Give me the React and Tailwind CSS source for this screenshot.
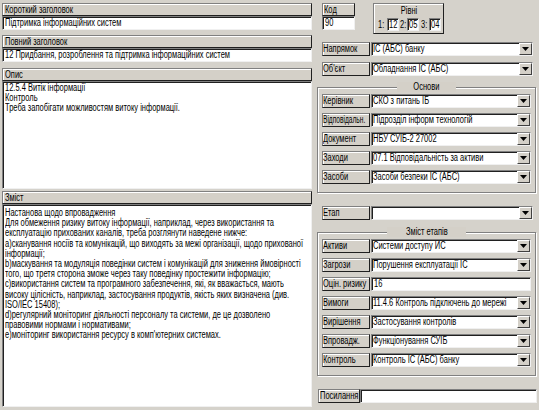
import React from "react";

const sunken =
  "bg-white border border-t-[#808080] border-l-[#808080] border-b-[#f0f0f0] border-r-[#f0f0f0] shadow-[inset_1px_1px_0_#202020]";
const raised =
  "bg-[#d4d0c8] border border-t-[#808080] border-l-[#808080] border-b-[#202020] border-r-[#202020] shadow-[inset_1px_1px_0_#ffffff]";

function T({ children, center, narrow }) {
  return (
    <span
      className={`inline-block whitespace-nowrap ${narrow ? "scale-x-[0.66]" : "scale-x-[0.75]"} ${
        center ? "origin-center" : "origin-left"
      }`}
    >
      {children}
    </span>
  );
}

function Bar({ children, className = "", narrow }) {
  return (
    <div className={`h-[13px] ${raised} flex items-center overflow-hidden ${className}`}>
      <T narrow={narrow}>{children}</T>
    </div>
  );
}

function Field({ children, className = "" }) {
  return (
    <div className={`h-[14px] ${sunken} pl-[2px] flex items-center overflow-hidden min-w-0 ${className}`}>
      <T>{children}</T>
    </div>
  );
}

function Arrow() {
  return (
    <svg width="7" height="4" viewBox="0 0 7 4" className="block">
      <path d="M0 0 H7 L3.5 4 Z" fill="#000" />
    </svg>
  );
}

function Select({ children }) {
  return (
    <div className={`flex-1 min-w-0 h-[14px] ${sunken} flex`}>
      <div className="flex-1 min-w-0 pl-[1px] flex items-center overflow-hidden">
        <T>{children}</T>
      </div>
      <div className="w-[13px] shrink-0 h-full bg-[#d4d0c8] border border-t-white border-l-white border-b-[#404040] border-r-[#404040] flex items-center justify-center">
        <Arrow />
      </div>
    </div>
  );
}

function Row({ label, children, input, narrow }) {
  return (
    <div className="flex h-[14px] gap-[1px] min-w-0">
      <Bar className="w-[48px] h-[14px] shrink-0 pl-0" narrow={narrow}>
        {label}
      </Bar>
      {input ? <Field className="flex-1">{children}</Field> : <Select>{children}</Select>}
    </div>
  );
}

function Small({ children }) {
  return (
    <div className={`w-[12px] h-[13px] shrink-0 ${sunken} flex items-center pl-[1px] overflow-hidden`}>
      <T>{children}</T>
    </div>
  );
}

function Slot({ children, className = "" }) {
  return <div className={`shrink-0 flex items-center ${className}`}><T>{children}</T></div>;
}

function Group({ title, children, className = "" }) {
  return (
    <fieldset
      className={`min-w-0 border border-[#808080] shadow-[1px_1px_0_#ffffff,inset_1px_1px_0_#ffffff] px-[4px] ${className}`}
    >
      <legend className="mx-auto px-[12px] bg-[#d4d0c8] leading-[10px]">
        <T center>{title}</T>
      </legend>
      <div className="flex flex-col gap-[5px]">{children}</div>
    </fieldset>
  );
}

const opys = [
  "12.5.4 Витік інформації",
  "Контроль",
  "Треба запобігати можливостям витоку інформації.",
];

const zmist = [
  "Настанова щодо впровадження",
  "Для обмеження ризику витоку інформації, наприклад, через використання та",
  "експлуатацію прихованих каналів, треба розглянути наведене нижче:",
  "а)сканування носіїв та комунікацій, що виходять за межі організації, щодо прихованої",
  "інформації;",
  "b)маскування та модуляція поведінки систем і комунікацій для зниження ймовірності",
  "того, що третя сторона зможе через таку поведінку простежити інформацію;",
  "c)використання систем та програмного забезпечення, які, як вважається, мають",
  "високу цілісність, наприклад, застосування продуктів, якість яких визначена (див.",
  "ISO/IEC 15408);",
  "d)регулярний моніторинг діяльності персоналу та системи, де це дозволено",
  "правовими нормами і нормативами;",
  "e)моніторинг використання ресурсу в комп'ютерних системах.",
];

export default function App() {
  return (
    <div className="w-[539px] h-[410px] bg-[#d5d2cb] flex text-black text-[10px] leading-[10px] font-['Liberation_Sans',Arial,sans-serif] overflow-hidden">
      {/* left column */}
      <div className="w-[310px] shrink-0 ml-[2px] pt-[3px] flex flex-col">
        <Bar className="pl-[2px]">Короткий заголовок</Bar>
        <Field>Підтримка інформаційних систем</Field>
        <Bar className="mt-[5px] pl-[2px]">Повний заголовок</Bar>
        <Field>12 Придбання, розроблення та підтримка інформаційних систем</Field>
        <Bar className="mt-[6px] pl-[2px]">Опис</Bar>
        <div className={`h-[108px] ${sunken} pl-[2px] pt-[1px] overflow-hidden`}>
          {opys.map((l, i) => (
            <div key={i} className="h-[10px]">
              <T>{l}</T>
            </div>
          ))}
        </div>
        <Bar className="mt-[2px] pl-[2px]">Зміст</Bar>
        <div className={`flex-1 mb-[3px] ${sunken} pl-[2px] pt-[3px] overflow-hidden`}>
          {zmist.map((l, i) => (
            <div key={i} className="h-[10.2px]">
              <T>{l}</T>
            </div>
          ))}
        </div>
      </div>

      {/* right column */}
      <div className="w-[227px] shrink-0 min-w-0 pt-[3px] flex flex-col">
        <div className="flex pl-[10px]">
          <div className="w-[33px] flex flex-col">
            <Bar className="pl-[1px]">Код</Bar>
            <Field>90</Field>
          </div>
          <div className={`ml-[18px] w-[71px] h-[31px] ${raised} flex flex-col`}>
            <div className="mt-[2px] flex justify-center">
              <T center>Рівні</T>
            </div>
            <div className="flex items-center mt-[2px] pl-[3px]">
              <Slot className="w-[10px] pl-[1px]">1:</Slot>
              <Small>12</Small>
              <Slot className="w-[8px] pl-[1px]">2:</Slot>
              <Small>05</Small>
              <Slot className="w-[10px] pl-[2px]">3:</Slot>
              <Small>04</Small>
            </div>
          </div>
        </div>

        <div className="pl-[10px] pr-[6px] mt-[8px] flex flex-col gap-[6px]">
          <Row label="Напрямок">ІС (АБС) банку</Row>
          <Row label="Об'єкт">Обладнання ІС (АБС)</Row>
        </div>

        <Group title="Основи" className="ml-[5px] mr-[3px] mt-[6px] pb-[8px] pt-[2px]">
          <Row label="Керівник">СКО з питань ІБ</Row>
          <Row label="Відповідальн." narrow>
            Підрозділ інформ технологій
          </Row>
          <Row label="Документ">НБУ СУІБ-2 27002</Row>
          <Row label="Заходи">07.1 Відповідальність за активи</Row>
          <Row label="Засоби">Засоби безпеки ІС (АБС)</Row>
        </Group>

        <div className="pl-[10px] pr-[6px] mt-[13px]">
          <Row label="Етап"></Row>
        </div>

        <Group title="Зміст етапів" className="ml-[5px] mr-[3px] mt-[7px] pb-[8px] pt-[2px]">
          <Row label="Активи">Системи доступу ИС</Row>
          <Row label="Загрози">Порушення експлуатації ІС</Row>
          <Row label="Оцін. ризику" input>
            16
          </Row>
          <Row label="Вимоги">11.4.6 Контроль підключень до мережі</Row>
          <Row label="Вирішення">Застосування контролів</Row>
          <Row label="Впровадж.">Функціонування СУІБ</Row>
          <Row label="Контроль">Контроль ІС (АБС) банку</Row>
        </Group>

        <div className="flex ml-[6px] mr-[2px] mt-[13px] h-[14px]">
          <Bar className="w-[42px] h-[14px] shrink-0 pl-[1px]">Посилання</Bar>
          <Field className="flex-1"></Field>
        </div>
      </div>
    </div>
  );
}
